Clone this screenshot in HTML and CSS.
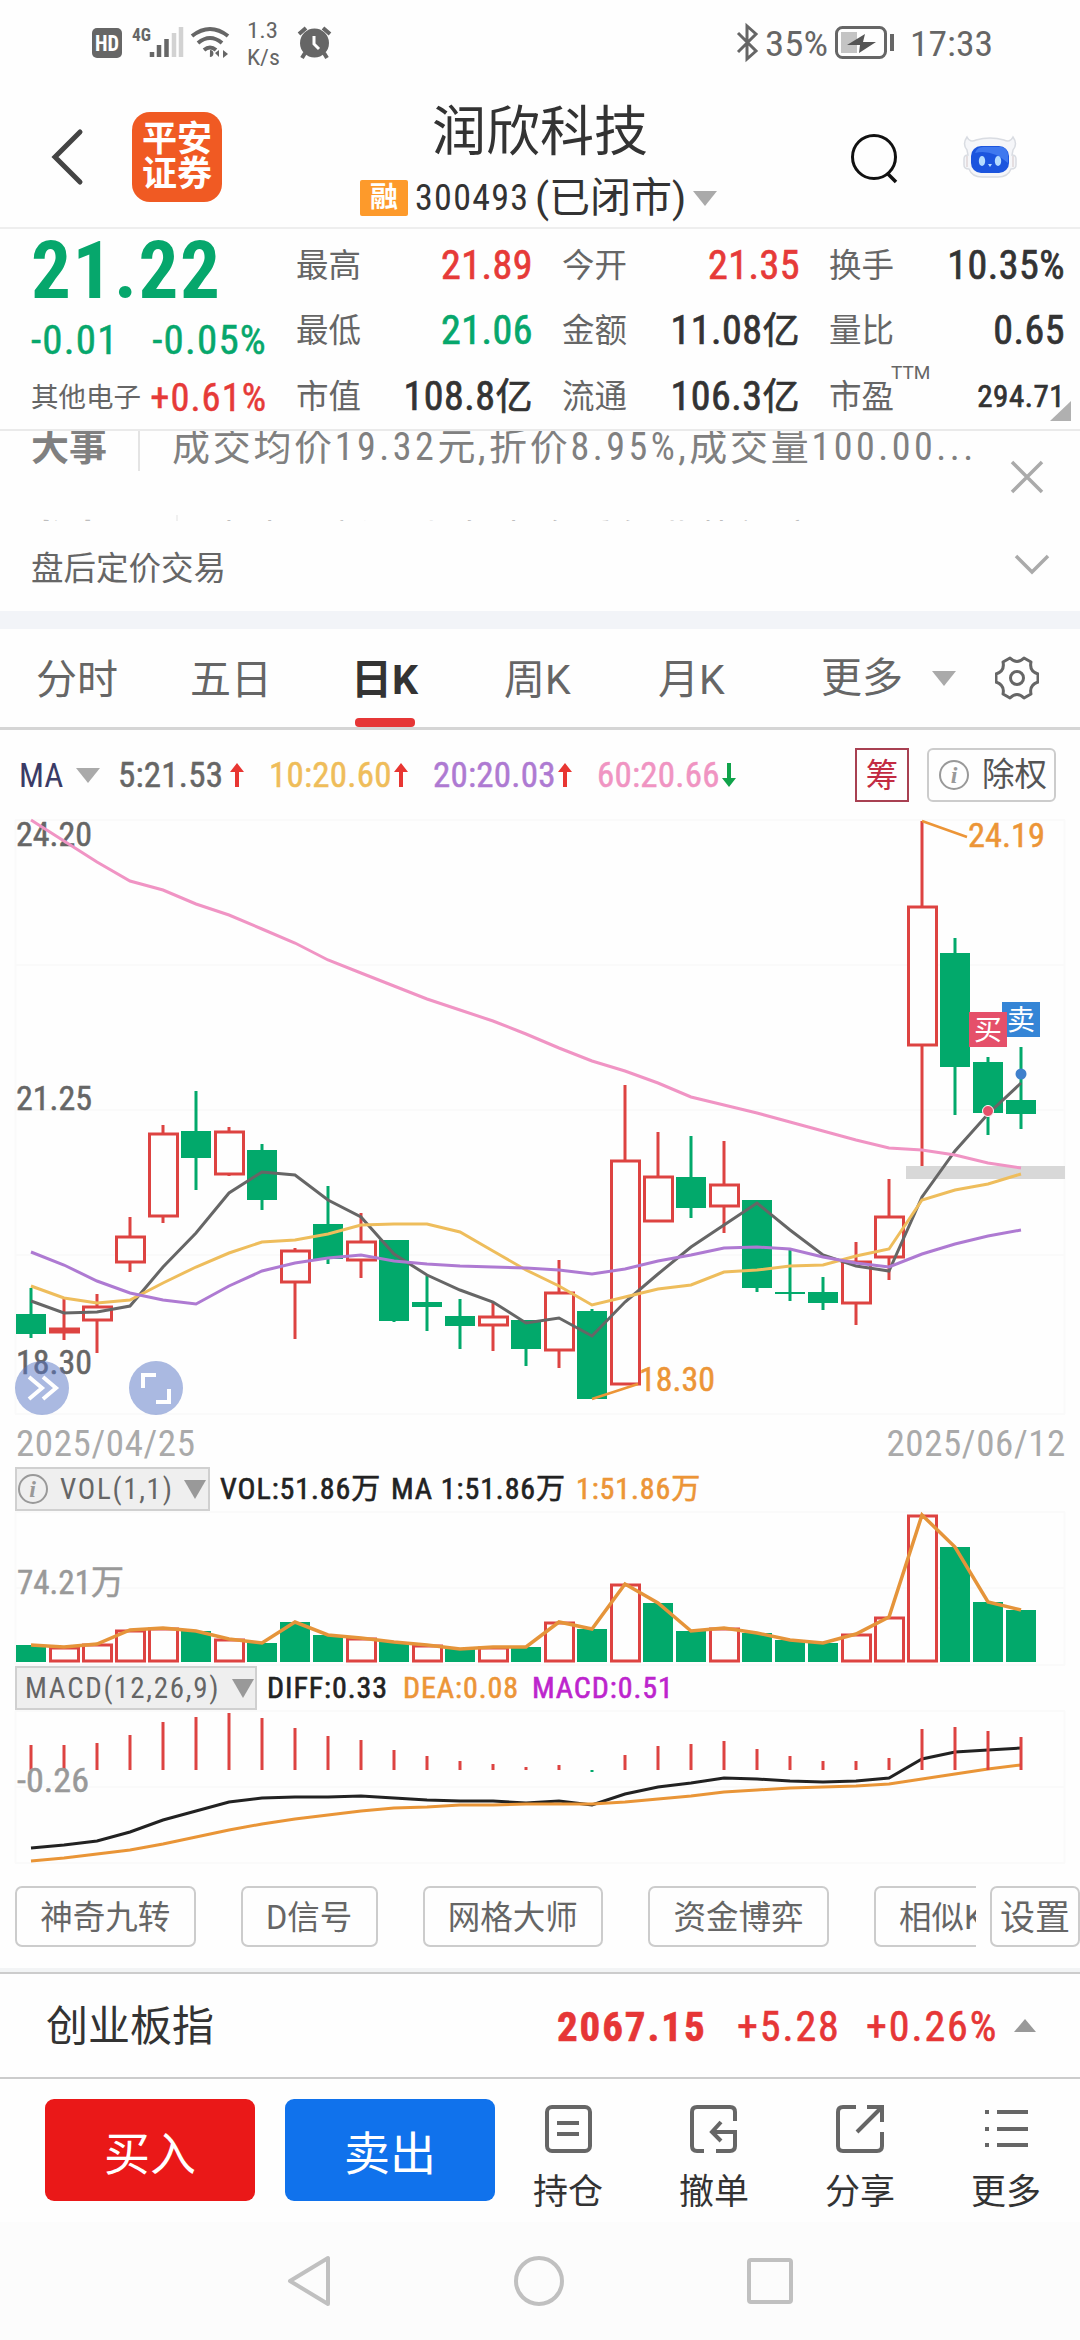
FILE: index.html
```html
<!DOCTYPE html>
<html lang="zh-CN">
<head>
    <meta charset="UTF-8">
    <title>润欣科技 300493</title>
    <meta name="viewport" content="width=device-width, initial-scale=1.0">
    <link rel="stylesheet" href="styles.css">
</head>
<body>
    <div class="status">
        <svg class="status-left" width="250" height="52" viewBox="90 18 250 52">
            <rect x="92" y="28" width="30" height="30" rx="5" fill="#666"/>
            <text x="95" y="51" class="st-bold" fill="#fff" font-size="22" textLength="24" lengthAdjust="spacingAndGlyphs">HD</text>
            <text x="132" y="41" class="st-bold" fill="#666" font-size="18" textLength="19" lengthAdjust="spacingAndGlyphs">4G</text>
            <path d="M152 52v5M159 45v12M166.500 39v18" stroke="#666" stroke-width="4.500"/>
            <path d="M174 33v24M181 27v30" stroke="#d2d2d2" stroke-width="4.500"/>
            <g fill="none" stroke="#666" stroke-width="4">
                <path d="M192 36q18-14 36 0M198 43q12-10 24 0M204 50q6-5 12 0"/>
            </g>
            <path d="M210 50a3 3 0 1 1-.1 7zM219 50v7l-4-4zM223 50l5 4-5 4z" fill="#666"/>
            <text x="247" y="38" font-size="22" fill="#666" textLength="31" lengthAdjust="spacingAndGlyphs">1.3</text>
            <text x="247" y="65" font-size="22" fill="#666" textLength="33" lengthAdjust="spacingAndGlyphs">K/s</text>
            <circle cx="314.500" cy="43" r="14.500" fill="#666"/>
            <path d="M299 34l7-6M330 34l-7-6M305 53l-3 5M324 53l3 5" stroke="#666" stroke-width="4"/>
            <path d="M314 36v8l5 5" stroke="#fff" stroke-width="3" fill="none"/>
        </svg>
        <svg class="status-right" width="262" height="50" viewBox="735 18 262 50">
            <path d="M738 33l18 18-9 8V26l9 8-18 18" fill="none" stroke="#666" stroke-width="3"/>
            <text x="765" y="56" font-size="35" fill="#666" textLength="63" lengthAdjust="spacingAndGlyphs">35%</text>
            <rect x="836.500" y="27.500" width="49" height="30" rx="6" fill="none" stroke="#666" stroke-width="3"/>
            <rect x="841" y="32" width="16" height="21" fill="#c4c4c4"/>
            <path d="M865 34l-18 11h13l-1 8 17-11h-13z" fill="#555"/>
            <path d="M892 34v17" stroke="#666" stroke-width="4"/>
            <text x="910" y="56" font-size="35" fill="#666" textLength="83" lengthAdjust="spacingAndGlyphs">17:33</text>
        </svg>
    </div>

    <header>
        <svg class="back" width="34" height="58" viewBox="0 0 34 58"><path d="M30 4L5 29l25 25" fill="none" stroke="#444" stroke-width="5" stroke-linecap="round"/></svg>
        <div class="logo">平安<br>证券</div>
        <div class="title">
            <h1>润欣科技</h1>
            <div class="code">
                <span class="tag">融</span>
                <span class="num code-no">300493</span>
                <span class="market">(已闭市)</span>
                <i class="down"></i>
            </div>
        </div>
        <svg class="search" width="50" height="54" viewBox="0 0 50 54"><circle cx="24" cy="25" r="21.500" fill="none" stroke="#111" stroke-width="3"/><path d="M37 41l9 9" stroke="#111" stroke-width="3.500"/></svg>
        <svg class="robot" width="54" height="44" viewBox="0 0 54 44">
            <path d="M4 15Q-1 9 4 2q3 6 9 3 14-4 28 0 6 3 9-3 5 7 0 13l-1 5q4 0 4 4v6q0 4-5 4-3 8-13 8H19Q9 42 6 34q-5 0-5-4v-6q0-4 4-4z" fill="#f5f6f9" stroke="#d9dce2" stroke-width="1.500"/>
            <path d="M4 21v11M50 21v11" stroke="#e0d6d8" stroke-width="1.500"/>
            <rect x="8" y="11" width="38" height="27" rx="10" fill="#1c55de"/>
            <path d="M12 18q2-6 8-6h18q6 0 7 8v8q-16-14-33-10z" fill="#3f78ef"/>
            <ellipse cx="19" cy="26" rx="3.200" ry="5" fill="#b5dcff"/>
            <ellipse cx="35" cy="26" rx="3.200" ry="5" fill="#b5dcff"/>
            <path d="M25 29h4l-2 3z" fill="#b5dcff"/>
        </svg>
    </header>

    <section class="quote">
        <div class="price">
            <div class="num big green">21.22</div>
            <div class="change green"><span class="num">-0.01</span><span class="num">-0.05%</span></div>
            <div class="sector"><span>其他电子</span><span class="num red">+0.61%</span></div>
        </div>
        <dl>
            <div><dt>最高</dt><dd class="num red">21.89</dd></div>
            <div><dt>最低</dt><dd class="num green">21.06</dd></div>
            <div><dt>市值</dt><dd class="num">108.8<b>亿</b></dd></div>
        </dl>
        <dl>
            <div><dt>今开</dt><dd class="num red">21.35</dd></div>
            <div><dt>金额</dt><dd class="num">11.08<b>亿</b></dd></div>
            <div><dt>流通</dt><dd class="num">106.3<b>亿</b></dd></div>
        </dl>
        <dl>
            <div><dt>换手</dt><dd class="num">10.35%</dd></div>
            <div><dt>量比</dt><dd class="num">0.65</dd></div>
            <div><dt>市盈<sup>TTM</sup></dt><dd class="num small">294.71</dd></div>
        </dl>
        <i class="corner"></i>
    </section>

    <section class="news">
        <div class="news-list">
            <div class="news-item"><b>大事</b><p>成交均价<span class="num">19.32</span>元<span class="num">,</span>折价<span class="num">8.95%,</span>成交量<span class="num">100.00...</span></p></div>
            <div class="news-item next"><b>龙虎图</b><p>查查最新，上龙虎全看行业热门交易</p></div>
        </div>
        <svg class="close" width="34" height="34" viewBox="0 0 34 34"><path d="M2 2l30 30M32 2L2 32" stroke="#aaa" stroke-width="3.500"/></svg>
    </section>
    <section class="after">
        <span>盘后定价交易</span>
        <svg width="36" height="22" viewBox="0 0 36 22"><path d="M2 2l16 16L34 2" fill="none" stroke="#aaa" stroke-width="3.500"/></svg>
    </section>

    <nav class="tabs">
        <a>分时</a>
        <a>五日</a>
        <a class="active">日K</a>
        <a>周K</a>
        <a>月K</a>
        <a class="more">更多<i class="down"></i></a>
        <svg width="44" height="44" viewBox="0 0 44 44" fill="none" stroke="#666" stroke-width="3">
            <path d="M15 2q7 7 14 0l7 4q-2 9 7 12v8q-9 3-7 12l-7 4q-7-7-14 0l-7-4q2-9-7-12v-8q9-3 7-12z" stroke-linejoin="round"/>
            <circle cx="22" cy="22" r="6.500"/>
        </svg>
    </nav>

    <div class="legend">
        <span class="num ma">MA</span><i class="down"></i>
        <span class="num avg avg5">5:21.53</span><svg class="arrow up" viewBox="0 0 14 24"><path d="M7 0l7 9H9v15H5V9H0z"/></svg>
        <span class="num avg avg10">10:20.60</span><svg class="arrow up" viewBox="0 0 14 24"><path d="M7 0l7 9H9v15H5V9H0z"/></svg>
        <span class="num avg avg20">20:20.03</span><svg class="arrow up" viewBox="0 0 14 24"><path d="M7 0l7 9H9v15H5V9H0z"/></svg>
        <span class="num avg avg60">60:20.66</span><svg class="arrow fall" viewBox="0 0 14 24"><path d="M7 24l7-9H9V0H5v15H0z"/></svg>
        <span class="chip-red">筹</span>
        <span class="chip-right"><i class="info">i</i>除权</span>
    </div>

    <svg id="kline" class="plot" width="1080" height="609" viewBox="0 810 1080 609"></svg>
    <div class="dates"><span class="num">2025/04/25</span><span class="num">2025/06/12</span></div>

    <div class="indicator">
        <div class="picker vol"><i class="info">i</i><span class="num">VOL(1,1)</span><i class="down"></i></div>
        <span class="num w-a">VOL:51.86<b>万</b></span><span class="num w-b">MA 1:51.86<b>万</b></span><span class="num orange">1:51.86<b>万</b></span>
    </div>
    <svg id="volume" class="plot" width="1080" height="155" viewBox="0 1511 1080 155"></svg>

    <div class="indicator">
        <div class="picker macd"><span class="num">MACD(12,26,9)</span><i class="down"></i></div>
        <span class="num w-c">DIFF:0.33</span><span class="num w-d orange">DEA:0.08</span><span class="num purple">MACD:0.51</span>
    </div>
    <svg id="macd" class="plot" width="1080" height="156" viewBox="0 1710 1080 156"></svg>

    <div class="tools">
        <div class="tool-list">
            <span>神奇九转</span>
            <span>D信号</span>
            <span>网格大师</span>
            <span>资金博弈</span>
            <span>相似K线</span>
        </div>
        <span class="setting">设置</span>
    </div>

    <div class="index-bar">
        <span class="index-name">创业板指</span>
        <span class="num index-value">2067.15</span>
        <span class="num index-diff">+5.28</span>
        <span class="num index-rate">+0.26%</span>
        <i class="up-tri"></i>
    </div>

    <div class="actions">
        <button class="buy">买入</button>
        <button class="sell">卖出</button>
        <a>
            <svg viewBox="0 0 48 48"><rect x="3" y="2" width="43" height="44" rx="5"/><path d="M13 18h22M13 29h22"/></svg>
            <span>持仓</span>
        </a>
        <a>
            <svg viewBox="0 0 48 48"><path d="M14 46H7q-5 0-5-5V7q0-5 5-5h33q5 0 5 5v9M26 46h14q5 0 5-5V27H22M31 17l-9 10 9 9"/></svg>
            <span>撤单</span>
        </a>
        <a>
            <svg viewBox="0 0 48 48"><path d="M20 2H7Q2 2 2 7v34q0 5 5 5h34q5 0 5-5V27M31 2h15v15M46 2L21 27"/></svg>
            <span>分享</span>
        </a>
        <a>
            <svg viewBox="0 0 48 48"><path d="M15 7h31M15 24h31M15 40h31M3 7h4M3 24h4M3 40h4"/></svg>
            <span>更多</span>
        </a>
    </div>

    <div class="sysnav">
        <svg width="44" height="52" viewBox="0 0 44 52"><path d="M41 3v46L3 26z"/></svg>
        <svg width="52" height="52" viewBox="0 0 52 52"><circle cx="26" cy="26" r="23"/></svg>
        <svg width="46" height="48" viewBox="0 0 46 48"><rect x="2" y="3" width="42" height="42" rx="2"/></svg>
    </div>
    <script src="script.js"></script>
</body>
</html>
```
FILE: styles.css
```css
* {
    box-sizing: border-box;
    margin: 0;
    padding: 0;
}
body {
    width: 1080px;
    height: 2340px;
    background: #fefefe;
    color: #333;
    font-family: Roboto, "Noto Sans CJK SC", sans-serif;
    font-size: 32.500px;
    line-height: 1;
    overflow: hidden;
}
.num,
svg text {
    font-family: "Roboto Condensed", Roboto, "Noto Sans CJK SC", sans-serif;
}
.num {
    white-space: nowrap;
}
i {
    font-style: normal;
}
svg {
    display: block;
    flex: none;
}
.red { color: #e63a38; }
.green { color: #06a76c; }
.orange { color: #ec9537; }
.purple { color: #bd24cd; }
.down {
    display: inline-block;
    flex: none;
    border: 12px solid transparent;
    border-top: 15px solid #aaa;
    border-bottom: 0;
}

/* status bar */
.status {
    display: flex;
    justify-content: space-between;
    height: 85px;
    padding: 18px 83px 0 90px;
}
.st-bold {
    font-weight: bold;
}

/* header */
header {
    display: flex;
    height: 144px;
    border-bottom: 2px solid #eee;
}
.back {
    margin: 43px 0 0 50px;
}
.logo {
    width: 90px;
    height: 90px;
    margin: 27px 0 0 48px;
    padding-top: 10px;
    border-radius: 18px;
    background: #f05a23;
    color: #fff;
    font-size: 35px;
    font-weight: bold;
    text-align: center;
}
.title {
    width: 360px;
    margin: 18px 0 0 138px;
}
h1 {
    padding-left: 72px;
    font-size: 54px;
    font-weight: normal;
    line-height: 60px;
}
.code {
    display: flex;
    align-items: center;
    height: 44px;
    margin-top: 13px;
}
.tag {
    width: 48px;
    height: 36px;
    margin-right: 7px;
    border-radius: 2px;
    background: #fd9a2b;
    color: #fff;
    font-size: 28px;
    font-weight: bold;
    line-height: 35px;
    text-align: center;
}
.code-no {
    width: 120px;
    font-size: 36px;
    letter-spacing: 1.300px;
}
.market {
    width: 158px;
    font-size: 41px;
    line-height: 46px;
}
.search {
    margin: 47px 0 0 130px;
}
.robot {
    margin: 50px 0 0 63px;
}

/* quote */
.quote {
    position: relative;
    display: grid;
    grid-template-columns: 233px 234px 235px 233px;
    gap: 32px;
    height: 202px;
    padding: 4px 18px 0 31px;
    border-bottom: 2px solid #eaeaea;
}
.price .big {
    height: 76px;
    font-size: 79px;
    font-weight: bold;
    letter-spacing: 1.600px;
    line-height: 76px;
}
.change {
    display: flex;
    justify-content: space-between;
    height: 64px;
    margin-right: -3px;
    font-size: 41px;
    letter-spacing: 1.200px;
    line-height: 62px;
    -webkit-text-stroke: 0.500px currentColor;
}
.sector {
    display: flex;
    justify-content: space-between;
    align-items: center;
    height: 50px;
    margin-right: -3px;
    color: #666;
    font-size: 27.500px;
}
.sector .num {
    font-size: 38.500px;
    letter-spacing: 1px;
    -webkit-text-stroke: 0.500px currentColor;
}
dl > div {
    display: flex;
    justify-content: space-between;
    align-items: center;
    height: 65.500px;
}
dt {
    position: relative;
    color: #666;
    font-size: 32.500px;
}
dd {
    margin-right: -3px;
    font-size: 40px;
    letter-spacing: 0.500px;
    -webkit-text-stroke: 0.700px currentColor;
}
dd b {
    font-size: 37px;
    font-weight: normal;
}
dd.small {
    font-size: 31px;
}
sup {
    position: absolute;
    top: -20px;
    left: 62px;
    font-size: 19px;
    line-height: 24px;
}
.corner {
    position: absolute;
    right: 9px;
    bottom: 8px;
    border-left: 21px solid transparent;
    border-bottom: 20px solid #b0b0b0;
}

/* news */
.news {
    display: flex;
    height: 90px;
    overflow: hidden;
}
.news-list {
    width: 1010px;
}
.news-item {
    display: flex;
    align-items: center;
    height: 52px;
    margin-top: -10px;
    padding-left: 31px;
    color: #808080;
    font-size: 38px;
}
.news-item b {
    padding-right: 31px;
    border-right: 2px solid #e4e4e4;
    line-height: 48px;
}
.news-item p {
    padding-left: 32px;
    letter-spacing: 2.700px;
    line-height: 52px;
    white-space: nowrap;
}
.news-item .num {
    letter-spacing: 3.500px;
}
.next {
    margin-top: 40px;
    opacity: 0.500;
}
.close {
    margin: 29px 0 0;
}
.after {
    display: flex;
    align-items: center;
    justify-content: space-between;
    height: 108px;
    padding: 6px 30px 0 31px;
    border-bottom: 18px solid #f2f4f8;
    color: #666;
}
.after svg {
    margin-top: -9px;
}

/* period tabs */
.tabs {
    display: flex;
    align-items: center;
    height: 101px;
    padding: 0 39px 0 36px;
    border-bottom: 3px solid #d5d5d5;
    color: #666;
    font-size: 41px;
}
.tabs a {
    position: relative;
    width: 154px;
    height: 98px;
    line-height: 103px;
}
.tabs a:nth-child(2) { width: 161px; }
.tabs a:nth-child(3) { width: 153px; }
.tabs .active {
    color: #333;
    font-weight: bold;
}
.tabs .active::after {
    content: "";
    position: absolute;
    left: 4px;
    bottom: 0;
    width: 60px;
    height: 9px;
    border-radius: 4px;
    background: #e63636;
}
.tabs a:nth-child(5) { width: 163px; }
.tabs .more {
    display: flex;
    align-items: center;
    gap: 29px;
    width: 174px;
}

/* moving average legend */
.legend {
    display: flex;
    align-items: center;
    height: 80px;
    padding: 10px 24px 0 19px;
}
.legend .ma {
    width: 57px;
    color: #3b3b66;
    font-size: 33px;
}
.legend .down {
    margin-right: 18px;
}
.avg {
    width: 125px;
    font-size: 35px;
    letter-spacing: 0.200px;
    -webkit-text-stroke: 0.500px currentColor;
}
.avg.avg5 { width: 112px; color: #666; }
.avg10 { color: #efbd5a; }
.avg20 { color: #ae7ad2; }
.avg60 { color: #f094c2; }
.arrow {
    width: 14px;
    height: 24px;
    margin-right: 25px;
}
.up { fill: #e83632; }
.fall { fill: #10a34a; }
.chip-red {
    width: 54px;
    height: 54px;
    margin-left: auto;
    border: 2px solid #a84052;
    color: #c22b42;
    line-height: 53px;
    text-align: center;
}
.chip-right {
    display: flex;
    align-items: center;
    width: 129px;
    height: 54px;
    margin-left: 18px;
    padding-left: 10px;
    border: 2px solid #ccc;
    border-radius: 6px;
    color: #555;
    line-height: 53px;
}
.info {
    width: 30px;
    height: 30px;
    margin-right: 13px;
    border: 2px solid #999;
    border-radius: 50%;
    color: #999;
    font: italic bold 24px/26px "Liberation Serif", serif;
    text-align: center;
}

/* charts */
.plot text {
    font-size: 34px;
}
.dates {
    display: flex;
    justify-content: space-between;
    height: 48px;
    padding: 0 14px 0 16px;
    color: #aaa;
    font-size: 37px;
    letter-spacing: 0.600px;
    line-height: 50px;
}
.indicator {
    display: flex;
    align-items: center;
    height: 44px;
    padding-left: 15px;
    color: #222;
    font-size: 30px;
    letter-spacing: 0.900px;
    line-height: 46px;
    -webkit-text-stroke: 0.600px currentColor;
}
.indicator b {
    font-size: 29px;
    font-weight: normal;
}
.indicator .w-a { width: 171px; }
.indicator .w-b { width: 185px; }
.indicator .w-c { width: 136px; }
.indicator .w-d { width: 129px; }
.picker {
    display: flex;
    align-items: center;
    width: 195px;
    height: 44px;
    margin-right: 10px;
    border: 2px solid #d0d0d0;
    background: #efefef;
    color: #666;
    -webkit-text-stroke: 0;
}
.picker .info {
    margin: 0 12px 0 1px;
}
.picker .num {
    width: 124px;
    font-size: 29px;
    letter-spacing: 1.700px;
}
.picker .down {
    border-width: 19px 11px 0;
    border-top-color: #999;
}
.picker.macd {
    width: 242px;
    padding-left: 8px;
}
.macd .num {
    width: 207px;
}

/* tool chips */
.tools {
    display: flex;
    justify-content: space-between;
    height: 106px;
    padding: 20px 0 0 15px;
    border-bottom: 4px solid #f2f4f5;
    color: #666;
}
.tool-list {
    display: flex;
    gap: 45px;
    width: 961px;
    overflow: hidden;
}
.tool-list span,
.setting {
    flex: none;
    height: 61px;
    padding: 0 23.300px;
    border: 2px solid #ccc;
    border-radius: 7px;
    line-height: 61px;
    white-space: nowrap;
}
.tools .setting {
    padding: 0 8px;
    font-size: 35px;
}

/* index bar */
.index-bar {
    display: flex;
    align-items: center;
    height: 107px;
    padding: 3px 0 0 46px;
    border-top: 2px solid #ccc;
    border-bottom: 2px solid #ccc;
    color: #e63636;
    font-size: 42px;
}
.index-name {
    width: 511px;
    color: #333;
}
.index-bar .num {
    letter-spacing: 1.900px;
    -webkit-text-stroke: 0.600px currentColor;
}
.index-bar .index-value {
    width: 180px;
    font-size: 41px;
    font-weight: bold;
}
.index-diff { width: 129px; }
.index-rate { width: 148px; }
.up-tri {
    margin-top: -3px;
    border: 11px solid transparent;
    border-top: 0;
    border-bottom: 13px solid #999;
}

/* bottom actions */
.actions {
    display: flex;
    height: 143px;
    padding: 20px 0 0 45px;
}
button {
    width: 210px;
    height: 102px;
    margin-right: 30px;
    border: 0;
    border-radius: 9px;
    color: #fff;
    font: 46px/102px "Noto Sans CJK SC", sans-serif;
}
.buy { background: #ea1818; }
.sell { margin-right: 0; background: #1072ec; }
.actions a {
    display: flex;
    flex-direction: column;
    align-items: center;
    width: 146px;
    padding-top: 6px;
    font-size: 35px;
}
.actions a svg {
    width: 48px;
    height: 48px;
    margin-bottom: 22px;
    fill: none;
    stroke: #666;
    stroke-width: 4;
}

/* system navigation */
.sysnav {
    display: flex;
    justify-content: center;
    align-items: center;
    gap: 182px;
    height: 118px;
    background: #fcfcfc;
}
.sysnav svg {
    fill: none;
    stroke: #c0c0c0;
    stroke-width: 4;
    stroke-linejoin: round;
}
```
FILE: script.js
```js
const RED = "#dd4341";
const GREEN = "#02a96b";
const STEP = 33;
const cx = (i) => 31 + i * STEP;

// [up, body top, body bottom, high, low]
const candles = [
    [0, 1314, 1334, 1288, 1338], [1, 1328, 1333, 1299, 1340], [1, 1306, 1321, 1294, 1353],
    [1, 1236, 1263, 1217, 1272], [1, 1133, 1217, 1125, 1223], [0, 1131, 1158, 1091, 1190],
    [1, 1131, 1175, 1127, 1176], [0, 1150, 1200, 1144, 1210], [1, 1250, 1283, 1248, 1339],
    [0, 1224, 1259, 1186, 1264], [1, 1241, 1261, 1213, 1278], [0, 1240, 1321, 1240, 1322],
    [0, 1302, 1307, 1276, 1331], [0, 1316, 1326, 1299, 1349], [1, 1316, 1326, 1302, 1351],
    [0, 1320, 1349, 1320, 1366], [1, 1292, 1351, 1260, 1368], [0, 1311, 1399, 1309, 1399],
    [1, 1160, 1385, 1085, 1385], [1, 1176, 1222, 1132, 1222], [0, 1177, 1208, 1136, 1218],
    [1, 1184, 1207, 1141, 1233], [0, 1200, 1288, 1200, 1292], [0, 1292, 1294, 1250, 1301],
    [0, 1292, 1303, 1277, 1310], [1, 1261, 1304, 1242, 1325], [1, 1216, 1258, 1179, 1280],
    [1, 906, 1046, 821, 1166], [0, 953, 1067, 938, 1115], [0, 1062, 1113, 1057, 1135],
    [0, 1100, 1114, 1047, 1129]
];
const ma5 = [1301, 1313, 1312, 1306, 1267, 1233, 1193, 1172, 1175, 1200, 1217, 1254, 1275, 1290, 1302, 1323, 1318, 1336, 1302, 1274, 1247, 1225, 1203, 1230, 1255, 1266, 1271, 1197, 1151, 1114, 1083];
const ma10 = [1286, 1298, 1303, 1300, 1283, 1267, 1253, 1242, 1240, 1234, 1225, 1224, 1224, 1232, 1251, 1270, 1286, 1305, 1297, 1289, 1285, 1272, 1270, 1266, 1265, 1256, 1249, 1200, 1190, 1184, 1174];
const ma20 = [1252, 1265, 1281, 1293, 1300, 1304, 1286, 1271, 1263, 1258, 1255, 1261, 1264, 1266, 1267, 1268, 1270, 1274, 1269, 1261, 1255, 1248, 1247, 1249, 1257, 1263, 1267, 1254, 1244, 1236, 1230];
const ma60 = [820, 841, 862, 881, 890, 904, 915, 929, 943, 960, 973, 986, 999, 1010, 1021, 1034, 1048, 1061, 1071, 1083, 1097, 1105, 1113, 1122, 1131, 1140, 1148, 1150, 1155, 1163, 1168];
const volume = [1645, 1647, 1644, 1630, 1628, 1631, 1639, 1643, 1622, 1635, 1638, 1642, 1645, 1649, 1647, 1647, 1622, 1629, 1584, 1603, 1631, 1628, 1633, 1640, 1643, 1634, 1617, 1515, 1547, 1602, 1610];
const volumeUp = "0111101000101010101001000111000";
const bars = [1745, 1745, 1743, 1735, 1722, 1717, 1713, 1718, 1728, 1736, 1740, 1750, 1756, 1761, 1764, 1767, 1765, 1772, 1755, 1746, 1744, 1741, 1749, 1756, 1761, 1761, 1758, 1729, 1727, 1731, 1737];
const diff = [1848, 1845, 1841, 1832, 1820, 1811, 1802, 1798, 1797, 1797, 1796, 1798, 1800, 1801, 1801, 1803, 1801, 1805, 1794, 1787, 1783, 1778, 1779, 1781, 1782, 1781, 1778, 1759, 1752, 1750, 1748];
const dea = [1861, 1858, 1854, 1850, 1844, 1837, 1830, 1824, 1819, 1815, 1811, 1808, 1807, 1805, 1805, 1804, 1804, 1804, 1802, 1799, 1796, 1792, 1790, 1788, 1787, 1786, 1784, 1779, 1774, 1769, 1765];

const line = (ys, color, w = 3) =>
    `<polyline points="${ys.map((y, i) => cx(i) + "," + y).join(" ")}" fill="none" stroke="${color}" stroke-width="${w}"/>`;
const label = (x, y, w, text, color) =>
    `<text x="${x}" y="${y}" fill="${color}" stroke="${color}" stroke-width="0.500" textLength="${w}" lengthAdjust="spacingAndGlyphs">${text}</text>`;
const grid = (ys) =>
    `<path d="M15.5 ${ys[0]}V${ys[ys.length - 1]}M1064.5 ${ys[0]}V${ys[ys.length - 1]}${ys.map((y) => `M15 ${y}H1065`).join("")}" stroke="#fafafa" stroke-width="2" fill="none"/>`;
const box = (i, up, top, bottom) => up
    ? `<rect x="${cx(i) - 13.5}" y="${top + 1}" width="28" height="${Math.max(bottom - top - 2, 2)}" fill="#fefefe" stroke="${RED}" stroke-width="3"/>`
    : `<rect x="${cx(i) - 15}" y="${top}" width="30" height="${bottom - top}" fill="${GREEN}"/>`;

let k = grid([820, 965, 1110, 1255, 1414]);
k += `<rect x="906" y="1166" width="159" height="13" fill="#d8d8d8"/>`;
k += label(16, 846, 76, "24.20", "#666") + label(16, 1110, 76, "21.25", "#666") + label(16, 1374, 76, "18.30", "#666");
candles.forEach(([up, top, bottom, high, low], i) => {
    k += `<path d="M${cx(i)} ${high}V${low}" stroke="${up ? RED : GREEN}" stroke-width="3"/>` + box(i, up, top, bottom);
});
k += line(ma5, "#666") + line(ma10, "#eebd5c") + line(ma20, "#ae7ad2") + line(ma60, "#f094c4");
k += `<path d="M922 821L967 837M592 1399L638 1384" stroke="#ec9537" stroke-width="2.500"/>`;
k += label(968, 847, 77, "24.19", "#ec9537") + label(639, 1391, 76, "18.30", "#ec9537");
k += `<rect x="1002" y="1002" width="38" height="35" fill="#3585d6"/><text x="1021" y="1030" text-anchor="middle" fill="#fff" style="font-size:28px">卖</text>`;
k += `<rect x="969" y="1012" width="38" height="35" fill="#e5506a"/><text x="988" y="1040" text-anchor="middle" fill="#fff" style="font-size:28px">买</text>`;
k += `<circle cx="988" cy="1111" r="5.500" fill="#e5506a" stroke="#fff"/><circle cx="1021" cy="1074" r="5.500" fill="#3f80cc"/>`;
k += `<g fill="#5574c4" fill-opacity="0.500"><circle cx="42" cy="1388" r="27"/><circle cx="156" cy="1388" r="27"/></g>`;
k += `<path d="M29 1377l13 11-13 11M43 1377l13 11-13 11M143 1388v-13h13M156 1402h13v-13" fill="none" stroke="#fff" stroke-width="4"/>`;
document.querySelector("#kline").innerHTML = k;

let v = grid([1512, 1588, 1665]) + label(17, 1594, 107, "74.21万", "#999");
volume.forEach((top, i) => {
    v += box(i, volumeUp[i] === "1", top, 1662);
});
v += line(volume, "#e5943a", 3.5);
document.querySelector("#volume").innerHTML = v;

let m = grid([1711, 1787, 1863]);
m += line(diff, "#222", 3) + line(dea, "#e99537", 3);
bars.forEach((top, i) => {
    m += `<path d="M${cx(i)} ${top}V1770" stroke="${top > 1770 ? GREEN : RED}" stroke-width="3"/>`;
});
m += label(17, 1792, 72, "-0.26", "#999");
document.querySelector("#macd").innerHTML = m;
```
